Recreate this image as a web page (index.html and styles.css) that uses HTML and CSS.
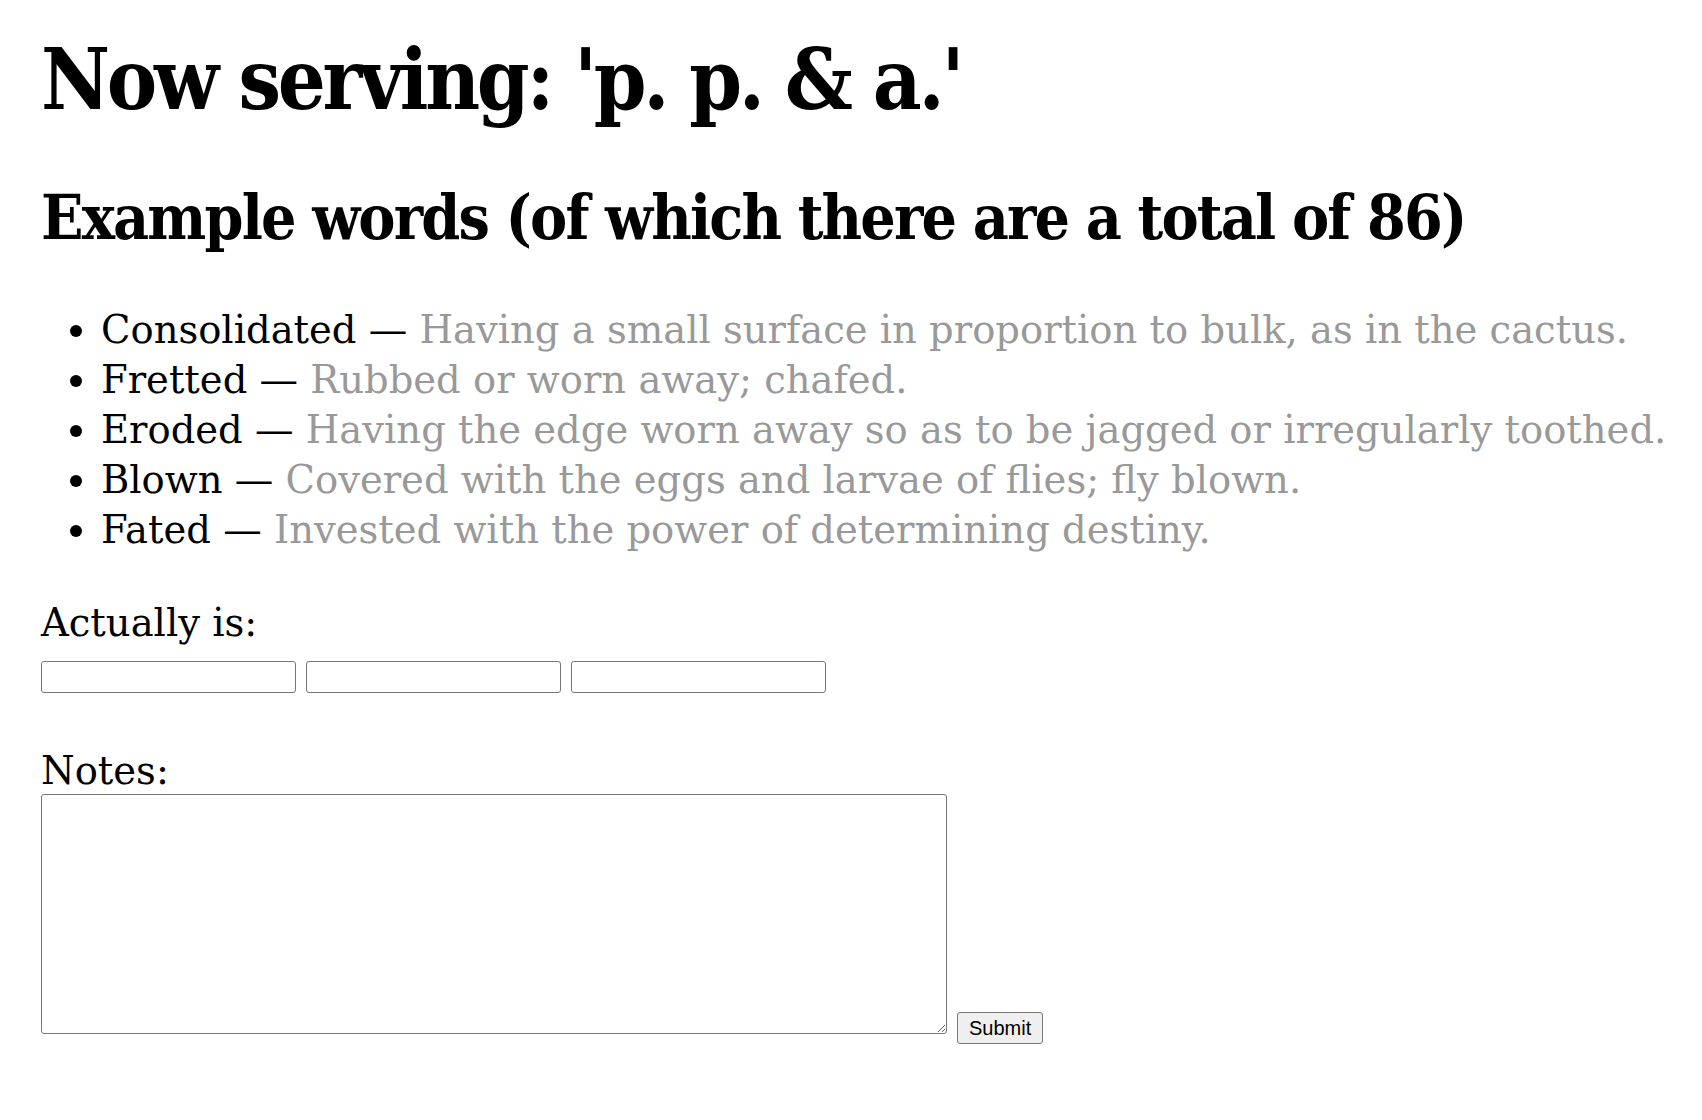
FILE: index.html
```html
<!DOCTYPE html>
<html lang="en">
<head>
    <meta charset="UTF-8">
    <title>Now serving</title>
    <link rel="stylesheet" href="styles.css">
</head>
<body>
    <h1>Now serving: 'p. p. &amp; a.'</h1>
    <h2>Example words (of which there are a total of 86)</h2>
    <ul class="examples">
        <li><span class="word">Consolidated</span> — <span class="def">Having a small surface in proportion to bulk, as in the cactus.</span></li>
        <li><span class="word">Fretted</span> — <span class="def">Rubbed or worn away; chafed.</span></li>
        <li><span class="word">Eroded</span> — <span class="def">Having the edge worn away so as to be jagged or irregularly toothed.</span></li>
        <li><span class="word">Blown</span> — <span class="def">Covered with the eggs and larvae of flies; fly blown.</span></li>
        <li><span class="word">Fated</span> — <span class="def">Invested with the power of determining destiny.</span></li>
    </ul>
    <form class="answer">
        <label class="field-label">Actually is:</label>
        <div class="answer-inputs">
            <input type="text">
            <input type="text">
            <input type="text">
        </div>
        <label class="field-label notes-label">Notes:</label>
        <div class="notes-row">
            <textarea class="notes"></textarea>
            <button type="button" class="submit">Submit</button>
        </div>
    </form>
</body>
</html>
```
FILE: styles.css
```css
body {
    font-family: "DejaVu Serif", serif;
    font-size: 38.5px;
    margin: 0;
    padding: 0 20px 0 41px;
    color: #000;
}
h1, h2 {
    font-family: "DejaVu Serif Condensed", "DejaVu Serif", serif;
    font-stretch: condensed;
}
h1 {
    font-size: 84px;
    line-height: 1.2;
    margin: 30px 0 0 0;
    letter-spacing: -3.3px;
}
h2 {
    font-size: 62px;
    line-height: 1.2;
    margin: 50px 0 0 0;
    letter-spacing: -1.85px;
}
.examples {
    margin: 50px 0 0 0;
    padding-left: 60px;
    line-height: 50px;
}
.examples li {
    white-space: nowrap;
}
.def {
    color: #999;
}
.field-label {
    display: block;
    line-height: 50px;
}
.answer {
    margin-top: 43px;
}
.answer-inputs {
    display: flex;
    gap: 10px;
    margin-top: 13px;
}
.answer-inputs input {
    width: 255px;
    height: 32px;
    box-sizing: border-box;
    border: 1px solid #767676;
    border-radius: 3px;
    font-size: 20px;
}
.notes-label {
    margin-top: 53px;
}
.notes-row {
    display: flex;
    align-items: flex-end;
    gap: 10px;
    margin-top: -2px;
}
.notes {
    width: 906px;
    height: 240px;
    box-sizing: border-box;
    border: 1px solid #767676;
    border-radius: 3px;
    font-size: 20px;
    margin: 0 0 10px 0;
}
.submit {
    font-family: "Liberation Sans", Arial, sans-serif;
    font-size: 20px;
    height: 32px;
    padding: 0 11px;
    border: 1px solid #767676;
    border-radius: 3px;
    background: #efefef;
    color: #000;
}
```
